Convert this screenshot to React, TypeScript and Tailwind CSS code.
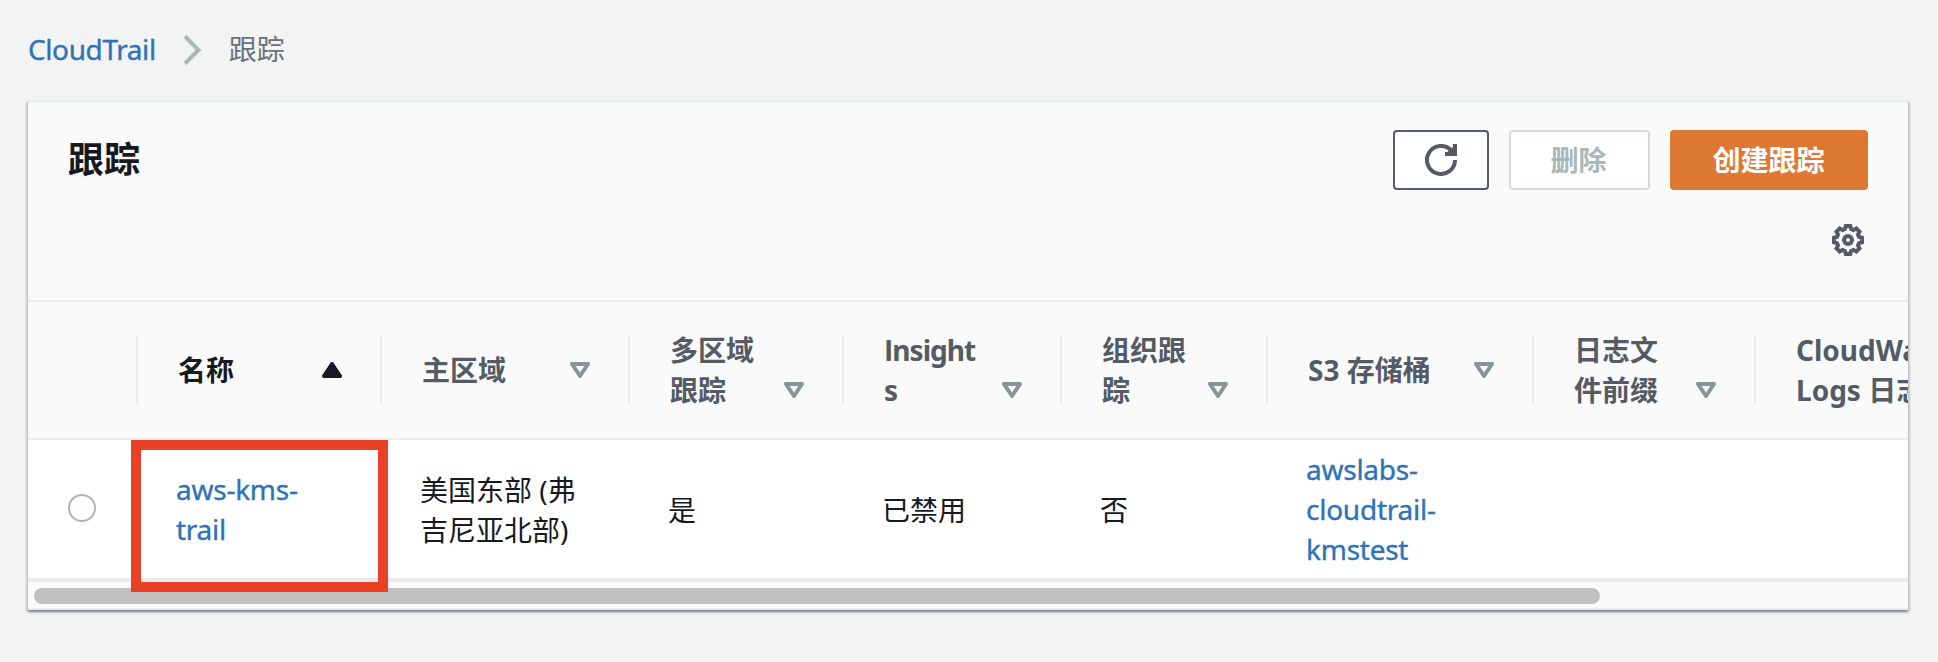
import type { ReactNode } from "react";

type Column = { width: string; label: ReactNode; sort?: "asc" | "none" };

const columns: Column[] = [
  { width: "w-[244px]", label: "名称", sort: "asc" },
  { width: "w-[248px]", label: "主区域", sort: "none" },
  { width: "w-[214px]", label: <>多区域<br />跟踪</>, sort: "none" },
  {
    width: "w-[218px]",
    label: <span className="tracking-[-0.95px]"><span className="font-['Open_Sans']">I</span>nsight<br />s</span>,
    sort: "none",
  },
  { width: "w-[206px]", label: <>组织跟<br />踪</>, sort: "none" },
  { width: "w-[266px]", label: "S3 存储桶", sort: "none" },
  { width: "w-[222px]", label: <>日志文<br />件前缀</>, sort: "none" },
  { width: "w-[260px]", label: <>CloudWatch<br />Logs 日志组</>, sort: "none" },
];

const cells: { value: ReactNode; link?: boolean }[] = [
  { value: <>aws-kms-<br />trail</>, link: true },
  { value: <>美国东部 (弗<br />吉尼亚北部)</> },
  { value: "是" },
  { value: "已禁用" },
  { value: "否" },
  { value: <>awslabs-<br />cloudtrail-<br />kmstest</>, link: true },
  { value: "" },
  { value: "" },
];

const linkStyle = "text-[#2e72b8] [-webkit-text-stroke:0.35px_#2e72b8]";

function SortIcon({ sort }: { sort: "asc" | "none" }) {
  return (
    <svg className="mb-3 h-4 w-5 shrink-0" viewBox="0 0 20 16" strokeLinejoin="round">
      {sort === "asc" ? (
        <path d="M10 2 18 14H2Z" fill="#16191f" stroke="#16191f" strokeWidth="4" />
      ) : (
        <path d="M2 2H18L10 14Z" fill="none" stroke="#879596" strokeWidth="4" />
      )}
    </svg>
  );
}

function Divider() {
  return <div className="h-[68px] w-0.5 shrink-0 bg-[#eaeded]" />;
}

function RefreshIcon() {
  return (
    <svg className="size-8" viewBox="0 0 32 32" fill="none" stroke="#545b64" strokeWidth="4">
      <path d="M30 16A14 14 0 1 1 26.4 6.6L30 10" />
      <path d="M30 0V10H20" />
      <path d="M21 9 28 3V10Z" fill="#545b64" stroke="none" />
    </svg>
  );
}

function GearIcon() {
  return (
    <svg className="size-8" viewBox="-16 -16 32 32" fill="none" stroke="#545b64" strokeWidth="4">
      <path d="M-2.2-14H2.2L3.2-11 5.5-10 8.3-11.5 11.5-8.3 10-5.5 11-3.2 14-2.2V2.2L11 3.2 10 5.5 11.5 8.3 8.3 11.5 5.5 10 3.2 11 2.2 14H-2.2L-3.2 11-5.5 10-8.3 11.5-11.5 8.3-10 5.5-11 3.2-14 2.2V-2.2L-11-3.2-10-5.5-11.5-8.3-8.3-11.5-5.5-10-3.2-11Z" />
      <circle r="4" />
    </svg>
  );
}

export default function App() {
  return (
    <div className="h-[662px] overflow-hidden bg-[#f2f3f3] font-['Noto_Sans','Noto_Sans_CJK_SC',sans-serif] text-[28px] leading-10 text-[#16191f]">
      <nav className="flex h-[100px] items-center pl-7">
        <a className={`mb-[3px] tracking-[-0.4px] ${linkStyle}`}>CloudTrail</a>
        <svg className="ml-7 size-[32px]" viewBox="0 0 32 32" fill="none" stroke="#aab7b8" strokeWidth="4">
          <path d="M1 2.5 14.5 16 1 29.5" />
        </svg>
        <span className="mb-0.5 ml-[13px] text-[#687078]">跟踪</span>
      </nav>

      <main className="mr-[30px] ml-7 h-[510px] overflow-hidden border-t-2 border-[#eaeded] bg-[#fafafa] shadow-[0_2px_2px_0_rgba(0,28,36,0.3),2px_2px_2px_0_rgba(0,28,36,0.15),-2px_2px_2px_0_rgba(0,28,36,0.15)]">
        <header className="flex h-[200px] flex-col border-b-2 border-[#eaeded] px-10 pt-7">
          <div className="flex items-center gap-5">
            <h1 className="mr-auto text-[36px] font-bold">跟踪</h1>
            <button className="flex h-[60px] w-24 items-center justify-center rounded-sm border-2 border-[#545b64] bg-white">
              <RefreshIcon />
            </button>
            <button className="h-[60px] w-[141px] rounded-sm border-2 border-[#d5dbdb] bg-white pr-0.5 font-bold text-[#aab7b8]">删除</button>
            <button className="h-[60px] w-[198px] rounded-sm bg-[#dd7932] pr-px font-bold text-white">创建跟踪</button>
          </div>
          <div className="mt-[34px] mr-1 flex justify-end">
            <GearIcon />
          </div>
        </header>

        <div className="flex h-[138px] items-center border-b-2 border-[#eaeded] font-bold text-[#545b64]">
          <div className="flex w-[110px] shrink-0 justify-end">
            <Divider />
          </div>
          {columns.map((column, i) => (
            <div key={i} className={`flex shrink-0 items-center ${column.width}`}>
              <div className={`flex flex-1 items-end justify-between pr-[38px] pl-10 whitespace-nowrap ${column.sort === "asc" ? "text-[#16191f]" : ""}`}>
                <span>{column.label}</span>
                {column.sort && <SortIcon sort={column.sort} />}
              </div>
              <Divider />
            </div>
          ))}
        </div>

        <div className="relative flex h-[142px] items-center border-b-4 border-[#eaeaea] bg-white">
          <div className="flex w-[110px] shrink-0 pb-0.5 pl-10">
            <span className="size-7 rounded-full border-2 border-[#aab7b8]" />
          </div>
          {cells.map((cell, i) => (
            <div key={i} className={`shrink-0 pl-[38px] whitespace-nowrap ${columns[i].width} ${cell.link ? `tracking-[-0.25px] ${linkStyle}` : "pt-0.5"}`}>
              {cell.value}
            </div>
          ))}
          <div className="absolute top-0 left-[103px] z-10 h-[152px] w-[257px] border-10 border-[#ea4025]" />
        </div>

        <div className="flex h-7 items-center border-b-2 border-[#eaeded] pt-0.5 pl-1.5">
          <div className="h-4 w-[1566px] rounded-full bg-[#c1c1c1]" />
        </div>
      </main>
    </div>
  );
}
